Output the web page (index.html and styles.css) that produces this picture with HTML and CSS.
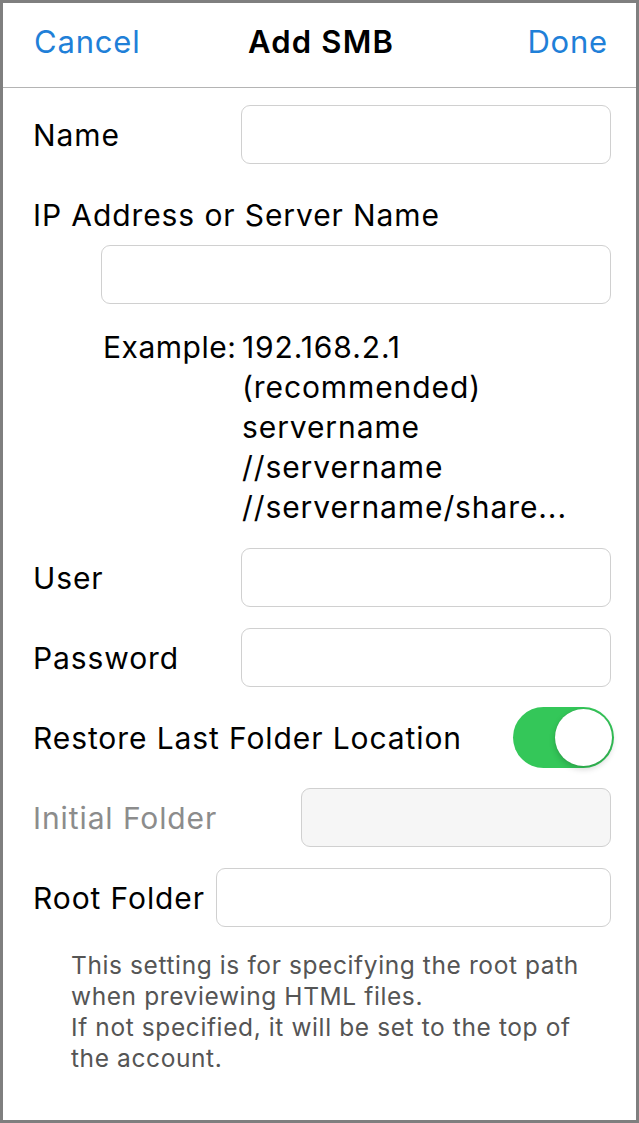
FILE: index.html
```html
<!DOCTYPE html>
<html lang="en">
<head>
<meta charset="utf-8">
<title>Add SMB</title>
<link rel="stylesheet" href="styles.css">
</head>
<body>
<div class="frame">
  <header class="navbar">
    <span class="nav-btn nav-left">Cancel</span>
    <span class="nav-title">Add SMB</span>
    <span class="nav-btn nav-right">Done</span>
  </header>
  <main class="form">
    <div class="row">
      <span class="label">Name</span>
      <div class="field field-std"></div>
    </div>
    <div class="row row-heading">
      <span class="label">IP Address or Server Name</span>
    </div>
    <div class="row">
      <div class="field field-ip"></div>
    </div>
    <div class="example">
      <span class="ex-key">Example:</span>
      <div class="ex-values">
        <span>192.168.2.1</span>
        <span>(recommended)</span>
        <span>servername</span>
        <span>//servername</span>
        <span>//servername/share...</span>
      </div>
    </div>
    <div class="row">
      <span class="label">User</span>
      <div class="field field-std"></div>
    </div>
    <div class="row">
      <span class="label">Password</span>
      <div class="field field-std"></div>
    </div>
    <div class="row row-toggle">
      <span class="label">Restore Last Folder Location</span>
      <div class="toggle"><div class="knob"></div></div>
    </div>
    <div class="row">
      <span class="label label-disabled">Initial Folder</span>
      <div class="field field-initial"></div>
    </div>
    <div class="row row-root">
      <span class="label">Root Folder</span>
      <div class="field field-root"></div>
    </div>
    <p class="note">This setting is for specifying the root path when previewing HTML files.<br>If not specified, it will be set to the top of the account.</p>
  </main>
</div>
</body>
</html>
```

FILE: styles.css
```css
* { box-sizing: border-box; }
html, body { margin: 0; padding: 0; background: #7f7f7f; }
body {
  font-family: Inter, "Liberation Sans", sans-serif;
  color: #000;
}
.frame {
  width: 639px;
  height: 1123px;
  border: 3px solid #7f7f7f;
  background: #fff;
  overflow: hidden;
}
.navbar {
  height: 85px;
  border-bottom: 1px solid #b4b4b4;
  display: grid;
  grid-template-columns: 1fr auto 1fr;
  align-items: center;
  padding: 0 28px 7px 31px;
}
.nav-btn {
  color: #1f80d8;
  font-size: 31px;
  letter-spacing: 0.8px;
}
.nav-left { justify-self: start; }
.nav-right { justify-self: end; }
.nav-title {
  font-size: 31px;
  font-weight: 600;
  letter-spacing: 1.2px;
}
.form {
  padding: 17px 25px 0 30px;
  display: flex;
  flex-direction: column;
  gap: 21px;
}
.row {
  height: 59px;
  display: flex;
  align-items: center;
}
.row-heading { margin-bottom: -20px; }
.label {
  font-size: 30px;
  letter-spacing: 0.9px;
  white-space: nowrap;
}
.label-disabled { color: #8c8c8c; }
.field {
  height: 59px;
  border: 1px solid #d0d0d0;
  border-radius: 9px;
  background: #fff;
}
.field-std { width: 370px; margin-left: auto; }
.field-ip { width: 510px; margin-left: auto; }
.field-initial { width: 310px; margin-left: auto; background: #f6f6f6; }
.row-root { gap: 11px; }
.field-root { flex: 1; }
.row-toggle { margin-right: -3px; }
.toggle {
  margin-left: auto;
  width: 101px;
  height: 61px;
  border-radius: 31px;
  background: #34c759;
  position: relative;
}
.knob {
  position: absolute;
  top: 2px;
  right: 2px;
  width: 57px;
  height: 57px;
  border-radius: 50%;
  background: #fff;
  box-shadow: 0 3px 6px rgba(0,0,0,0.18), 0 0 1px rgba(0,0,0,0.2);
}
.example {
  display: grid;
  grid-template-columns: 139px 1fr;
  padding-left: 70px;
  margin-top: 2px;
  font-size: 30px;
  letter-spacing: 0.9px;
}
.ex-key { line-height: 40px; letter-spacing: 0.5px; }
.ex-values { display: flex; flex-direction: column; }
.ex-values span { line-height: 40px; }
.note {
  margin: 2px 0 0 38px;
  font-size: 24.5px;
  letter-spacing: 0.6px;
  line-height: 31px;
  color: #555;
  width: 520px;
}
```
